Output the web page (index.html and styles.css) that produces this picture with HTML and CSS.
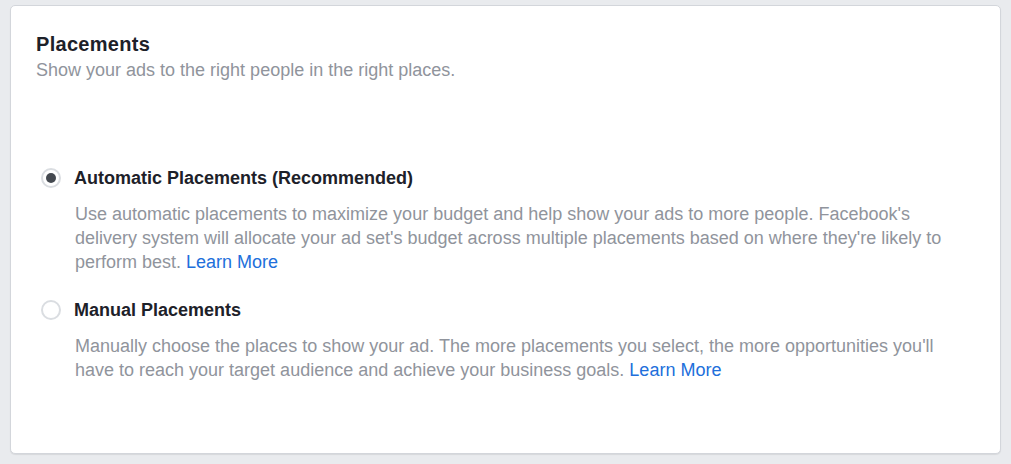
FILE: index.html
```html
<!DOCTYPE html>
<html>
<head>
<meta charset="utf-8">
<link rel="stylesheet" href="styles.css">
</head>
<body>
<div class="page">
  <div class="card">
    <div class="header">
      <div class="title">Placements</div>
      <div class="subtitle">Show your ads to the right people in the right places.</div>
    </div>
    <div class="options">
      <div class="option">
        <div class="row">
          <span class="radio checked"><span class="dot"></span></span>
          <span class="label">Automatic Placements (Recommended)</span>
        </div>
        <div class="desc">Use automatic placements to maximize your budget and help show your ads to more people. Facebook's delivery system will allocate your ad set's budget across multiple placements based on where they're likely to perform best. <a class="link" href="#">Learn More</a></div>
      </div>
      <div class="option">
        <div class="row">
          <span class="radio"></span>
          <span class="label">Manual Placements</span>
        </div>
        <div class="desc">Manually choose the places to show your ad. The more placements you select, the more opportunities you'll have to reach your target audience and achieve your business goals. <a class="link" href="#">Learn More</a></div>
      </div>
    </div>
  </div>
</div>
</body>
</html>
```

FILE: styles.css
```css
html, body {
  margin: 0;
  padding: 0;
  background: #e9ebee;
  font-family: "Liberation Sans", Arial, sans-serif;
}
.page {
  padding: 5px 10px 10px 10px;
}
.card {
  box-sizing: border-box;
  background: #fff;
  border: 1px solid #d3d6db;
  border-radius: 5px;
  box-shadow: 0 1px 1px rgba(0,0,0,0.08);
  padding: 26px 24px 40px 25px;
  height: 449px;
}
.title {
  font-size: 20px;
  font-weight: bold;
  color: #1d2129;
  line-height: 24px;
  letter-spacing: 0.3px;
}
.subtitle {
  font-size: 18px;
  color: #90949c;
  line-height: 24px;
  margin-top: 2px;
}
.options {
  margin-top: 84px;
  display: flex;
  flex-direction: column;
  gap: 24px;
}
.row {
  display: flex;
  align-items: center;
  gap: 13px;
  padding-left: 5px;
}
.radio {
  width: 16px;
  height: 16px;
  border: 2px solid #dadde1;
  border-radius: 50%;
  display: flex;
  align-items: center;
  justify-content: center;
  flex: none;
}
.dot {
  width: 10px;
  height: 10px;
  border-radius: 50%;
  background: #444950;
}
.label {
  font-size: 18px;
  font-weight: bold;
  color: #1d2129;
  line-height: 24px;
}
.desc {
  font-size: 18px;
  color: #90949c;
  line-height: 24px;
  padding-left: 39px;
  margin-top: 12px;
}
.link {
  color: #216fdb;
  text-decoration: none;
}
```
